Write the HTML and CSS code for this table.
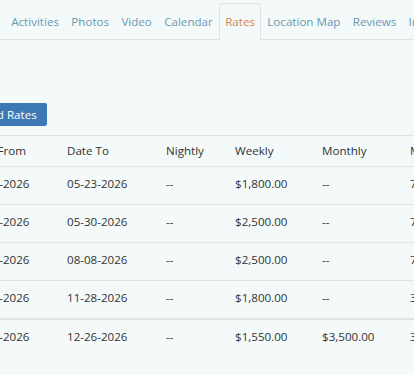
FILE: index.html
```html
<!DOCTYPE html>
<html lang="en">
<head>
<meta charset="utf-8">
<title>Rates</title>
<link rel="stylesheet" href="styles.css">
</head>
<body>
<nav class="tabs">
  <a class="tab" href="#">Activities</a>
  <a class="tab" href="#">Photos</a>
  <a class="tab" href="#">Video</a>
  <a class="tab" href="#">Calendar</a>
  <a class="tab active" href="#">Rates</a>
  <a class="tab" href="#">Location Map</a>
  <a class="tab" href="#">Reviews</a>
  <a class="tab" href="#">Inquire</a>
</nav>
<main class="content">
  <div class="actions">
    <button class="btn">Download Rates</button>
  </div>
  <table class="rates">
    <thead>
      <tr><th class="c-from">Date From</th><th class="c-to">Date To</th><th class="c-night">Nightly</th><th class="c-week">Weekly</th><th class="c-month">Monthly</th><th>Min Stay</th></tr>
    </thead>
    <tbody>
      <tr><td>05-16-2026</td><td>05-23-2026</td><td>--</td><td>$1,800.00</td><td>--</td><td>7</td></tr>
      <tr><td>05-23-2026</td><td>05-30-2026</td><td>--</td><td>$2,500.00</td><td>--</td><td>7</td></tr>
      <tr><td>05-30-2026</td><td>08-08-2026</td><td>--</td><td>$2,500.00</td><td>--</td><td>7</td></tr>
      <tr class="last-group"><td>08-08-2026</td><td>11-28-2026</td><td>--</td><td>$1,800.00</td><td>--</td><td>3</td></tr>
      <tr class="last-row"><td>11-28-2026</td><td>12-26-2026</td><td>--</td><td>$1,550.00</td><td>$3,500.00</td><td>3</td></tr>
    </tbody>
  </table>
</main>
</body>
</html>
```
FILE: styles.css
```css
html, body {
  margin: 0;
  padding: 0;
  background: #f3faf9;
  overflow: hidden;
}
body {
  font-family: "Open Sans", "Liberation Sans", sans-serif;
  font-size: 11.6px;
  color: #333;
  width: 414px;
}
.tabs {
  display: flex;
  white-space: nowrap;
  padding: 3px 0 0 5px;
  border-bottom: 1px solid #dde6e5;
  height: 36px;
}
.tab {
  display: block;
  padding: 0 5.2px;
  line-height: 36px;
  border: 1px solid transparent;
  border-bottom: none;
  color: #6a98b6;
  text-decoration: none;
  border-radius: 2px 2px 0 0;
}
.tab.active {
  color: #d8834f;
  border-color: #dde6e5;
  background: #f3faf9;
  height: 37px;
  box-sizing: border-box;
}
.content {
  margin-left: -39px;
  padding-top: 63px;
}
.actions {
  margin-left: -22px;
}
.btn {
  font: inherit;
  color: #fff;
  background: #3c78b4;
  border: none;
  border-radius: 2px;
  padding: 4px 10px;
  line-height: 15px;
  cursor: pointer;
}
.rates {
  margin-top: 9px;
  border-collapse: collapse;
  text-align: left;
  white-space: nowrap;
  width: 520px;
}
.rates th {
  font-weight: normal;
  padding: 7px 8px;
  line-height: 16px;
  border-top: 1px solid #dde6e5;
  border-bottom: 1px solid #dde6e5;
}
.rates td {
  padding: 8px 8px 12px;
  line-height: 17px;
  border-bottom: 1px solid #dde6e5;
}
.rates tr.last-group td {
  border-bottom-width: 2px;
}
.rates tr.last-row td {
  border-bottom: none;
}
.c-from { width: 82px; }
.c-to { width: 83px; }
.c-night { width: 53px; }
.c-week { width: 71px; }
.c-month { width: 72px; }
```
